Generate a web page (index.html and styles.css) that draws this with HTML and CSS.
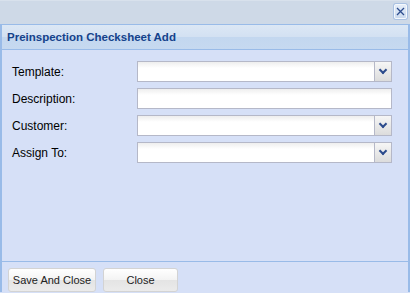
FILE: index.html
```html
<!DOCTYPE html>
<html lang="en">

<head>
    <meta charset="UTF-8">
    <meta name="viewport" content="width=device-width, initial-scale=1.0">
    <title>Preinspection Checksheet Add</title>
    <link rel="stylesheet" href="styles.css">
</head>

<body>
    <div class="window-bar">
        <button class="close-tool" title="Close">
            <svg width="9" height="9" viewBox="0 0 9 9">
                <path d="M1 1 L8 8 M8 1 L1 8" stroke="#2d4d8e" stroke-width="1.3" fill="none" />
            </svg>
        </button>
    </div>

    <div class="panel">
        <div class="panel-header">Preinspection Checksheet Add</div>

        <div class="panel-body">
            <div class="form-row">
                <label for="template">Template:</label>
                <div class="combo">
                    <input type="text" id="template">
                    <span class="trigger"></span>
                </div>
            </div>
            <div class="form-row">
                <label for="description">Description:</label>
                <div class="combo">
                    <input type="text" id="description">
                </div>
            </div>
            <div class="form-row">
                <label for="customer">Customer:</label>
                <div class="combo">
                    <input type="text" id="customer">
                    <span class="trigger"></span>
                </div>
            </div>
            <div class="form-row">
                <label for="assign-to">Assign To:</label>
                <div class="combo">
                    <input type="text" id="assign-to">
                    <span class="trigger"></span>
                </div>
            </div>
        </div>

        <div class="panel-footer">
            <button class="btn btn-save">Save And Close</button>
            <button class="btn btn-close">Close</button>
        </div>
    </div>
</body>

</html>
```

FILE: styles.css
```css
body {
    margin: 0;
    padding: 0;
    width: 410px;
    height: 293px;
    overflow: hidden;
    font-family: "Liberation Sans", Arial, sans-serif;
    background-color: #d6e0f7;
}

.window-bar {
    height: 24px;
    background-color: #ced9e7;
    border-top: 1px solid #d8e1ec;
    box-sizing: border-box;
    display: flex;
    justify-content: flex-end;
    align-items: flex-start;
    padding: 3px 3px 0 0;
}

.close-tool {
    width: 13px;
    height: 15px;
    padding: 0;
    border: 1px solid #f4f8fd;
    border-radius: 2px;
    background: linear-gradient(#e4edf8, #cbdaee);
    display: flex;
    align-items: center;
    justify-content: center;
    box-shadow: 0 0 0 1px #a9c1e2;
}

.panel {
    border-top: 1px solid #99bbe8;
    border-left: 2px solid #99bbe8;
    border-right: 2px solid #99bbe8;
}

.panel-header {
    height: 24px;
    line-height: 24px;
    padding-left: 5px;
    font-size: 11.5px;
    font-weight: bold;
    color: #15428b;
    background: linear-gradient(#dce7f5 0%, #d3e1f2 48%, #c3d7ef 50%, #c6d9f0 100%);
    border-bottom: 1px solid #99bbe8;
}

.panel-body {
    height: 212px;
    box-sizing: border-box;
    padding: 11px 16px 0 10px;
    background-color: #d6e0f7;
    border-bottom: 1px solid #99bbe8;
}

.form-row {
    display: flex;
    align-items: center;
    margin-bottom: 6px;
}

.form-row label {
    width: 125px;
    font-size: 12px;
    color: #000;
}

.combo {
    flex: 1;
    display: flex;
    height: 21px;
    box-sizing: border-box;
    border: 1px solid #b5b8c8;
    background: linear-gradient(#eeeeee, #ffffff 6px);
}

.combo input {
    flex: 1;
    min-width: 0;
    border: none;
    padding: 0 3px;
    background: transparent;
    font-family: inherit;
    font-size: 12px;
    outline: none;
}

.trigger {
    width: 16px;
    border-left: 1px solid #b5b8c8;
    background: linear-gradient(#f6f6f6, #dcdcdc);
    position: relative;
}

.trigger::after {
    content: "";
    position: absolute;
    left: 5px;
    top: 5px;
    width: 4px;
    height: 4px;
    border-right: 2px solid #2c4b8c;
    border-bottom: 2px solid #2c4b8c;
    transform: rotate(45deg);
}

.panel-footer {
    display: flex;
    gap: 7px;
    padding: 6px 0 0 6px;
    background-color: #d6e0f7;
}

.btn {
    height: 24px;
    padding: 0;
    border: 1px solid #d3d3d3;
    border-radius: 3px;
    background: linear-gradient(#ffffff, #f3f3f3 50%, #e4e4e4 52%, #ebebeb);
    font-family: inherit;
    font-size: 11px;
    color: #222;
    cursor: pointer;
}

.btn-save {
    width: 88px;
}

.btn-close {
    width: 75px;
}
```
